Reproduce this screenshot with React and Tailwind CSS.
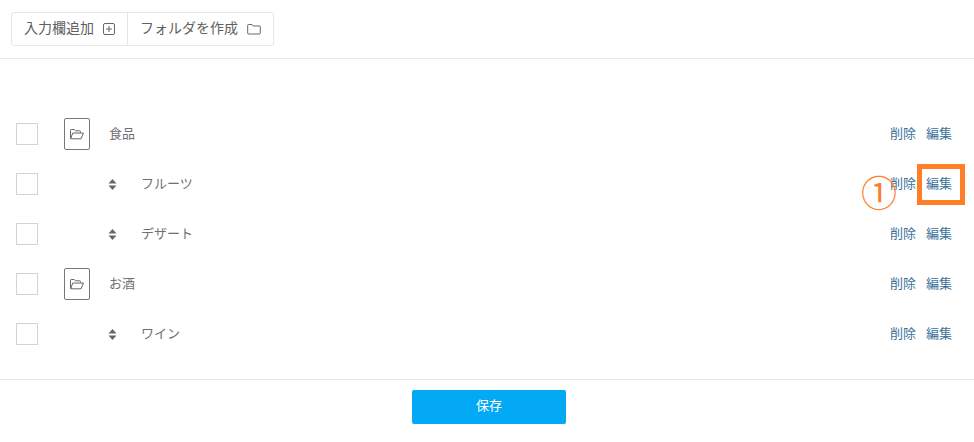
import React from 'react';

const font = { fontFamily: '"Noto Sans CJK JP", "Liberation Sans", sans-serif' };

const rows = [
  { id: 1, name: '食品', folder: true },
  { id: 2, name: 'フルーツ', callout: true },
  { id: 3, name: 'デザート' },
  { id: 4, name: 'お酒', folder: true },
  { id: 5, name: 'ワイン' },
];

const PlusBox = () => (
  <svg width="12" height="12" viewBox="0 0 12 12" fill="none" stroke="#666" strokeWidth="1">
    <rect x="0.5" y="0.5" width="11" height="11" rx="1.5" />
    <path d="M6 3v6M3 6h6" />
  </svg>
);

const Folder = () => (
  <svg width="14" height="12" viewBox="0 0 14 12" fill="none" stroke="#666" strokeWidth="1">
    <path d="M1.500 1.500h3.500l1.200 1.500h6.300a.8.8 0 0 1 .8.8v6.400a.8.8 0 0 1-.8.8H1.500a.8.8 0 0 1-.8-.8V2.300a.8.8 0 0 1 .8-.8z" />
  </svg>
);

const FolderOpen = () => (
  <svg width="14" height="11" viewBox="0 0 14 11" fill="none" stroke="#666" strokeWidth="1">
    <path d="M.5 9.500V1.200a.7.700 0 0 1 .7-.7h3l1.200 1.300h4.400a.7.700 0 0 1 .7.700v1" />
    <path d="M.6 9.800 2.800 4h10.600l-2.300 5.800z" />
  </svg>
);

const Sort = () => (
  <svg width="9" height="11" viewBox="0 0 9 11" fill="#666">
    <path d="M4.500 0 8.500 4.500H.5z" />
    <path d="M4.500 11 .5 6.500h8z" />
  </svg>
);

const Row = ({ row }) => (
  <div className="flex h-[50px] items-center pl-4 pr-[22px]">
    <div className="h-[22px] w-[22px] border border-[#d4d4d4] bg-white"></div>
    {row.folder ? (
      <>
        <div className="ml-[26px] flex h-[32px] w-[26px] items-center justify-center rounded-[2px] border border-[#777]">
          <FolderOpen />
        </div>
        <span className="mb-[2px] ml-[19px] text-[13px] text-[#707070]">{row.name}</span>
      </>
    ) : (
      <>
        <div className="ml-[70px] flex w-[9px]">
          <Sort />
        </div>
        <span className="mb-[2px] ml-6 text-[13px] text-[#707070]">{row.name}</span>
      </>
    )}
    <div className="mb-[2px] ml-auto flex gap-[10px] text-[13px] text-[#3a7199]">
      <span>削除</span>
      <span>編集</span>
    </div>
  </div>
);

export default function App() {
  return (
    <div className="relative h-[442px] w-[974px] overflow-hidden bg-white" style={font}>
      <div className="h-[59px] border-b border-[#e6e6e6] pl-[11px] pt-3">
        <div className="inline-flex h-[34px] items-center rounded-[3px] border border-[#e6e6e6] text-[14px] text-[#606060]">
          <div className="flex h-full w-[116px] items-center gap-[9px] border-r border-[#e6e6e6] pl-3">
            <span className="mb-[3px]">入力欄追加</span>
            <PlusBox />
          </div>
          <div className="flex h-full w-[145px] items-center gap-[9px] pl-3">
            <span className="mb-[3px]">フォルダを作成</span>
            <Folder />
          </div>
        </div>
      </div>

      <div className="h-[320px] pt-[50px]">
        {rows.map((row) => (
          <Row key={row.id} row={row} />
        ))}
      </div>

      <div className="flex h-[52px] justify-center border-t border-[#e6e6e6] pl-1 pt-[10px]">
        <button className="h-[34px] w-[154px] rounded-[2px] bg-[#03a9f4] pb-[5px] text-[13px] text-white">保存</button>
      </div>

      <div className="absolute left-[917px] top-[164px] h-[41px] w-[48px] border-[5px] border-[#ff7f27]"></div>
      <div className="absolute left-[861px] top-[168px] text-[36px] leading-[46px] text-[#ff7f27]">①</div>
    </div>
  );
}
